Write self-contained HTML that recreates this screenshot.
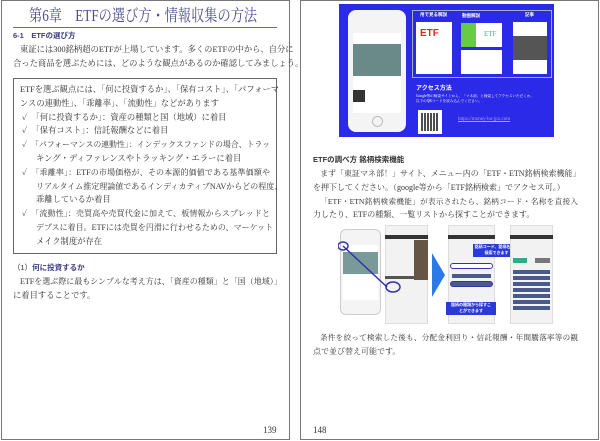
<!DOCTYPE html>
<html><head><meta charset="utf-8"><style>
*{margin:0;padding:0;box-sizing:border-box}
body{width:600px;height:441px;background:#fff;position:relative;overflow:hidden;font-family:"Liberation Serif","Noto Serif CJK SC","Noto Sans CJK JP",serif;color:#333}
.pg{position:absolute;border:1px solid #777;background:#fff}
.t{position:absolute;font-size:8.3px;line-height:10px;white-space:nowrap;text-align:justify;text-align-last:justify}
.g{font-family:"Liberation Sans","Noto Sans CJK JP",sans-serif;font-weight:bold}
.a{position:absolute}
</style></head><body>
<div class="pg" style="left:1px;top:0;width:289px;height:440px"></div>
<div class="pg" style="left:300px;top:0;width:299px;height:440px"></div>

<!-- left page -->
<div class="a" style="left:29px;top:6px;font-size:16.5px;line-height:20px;color:#4d4d8e;white-space:nowrap;transform:scaleX(0.8);transform-origin:0 0">第6章　ETFの選び方・情報収集の方法</div>
<div class="a" style="left:13px;top:27px;width:264px;height:1px;background:#6a6a9a"></div>
<div class="t g" style="left:13px;top:31px;font-size:7.5px;color:#3d3d80;text-align-last:auto">6-1　ETFの選び方</div>
<div class="t" style="left:20px;top:45px;width:257px">東証には300銘柄超のETFが上場しています。多くのETFの中から、自分に</div>
<div class="t" style="left:13px;top:59px;width:264px">合った商品を選ぶためには、どのような観点があるのか確認してみましょう。</div>
<div class="a" style="left:13px;top:78px;width:264px;height:176px;border:1px solid #666"></div>
<div class="t" style="left:20px;top:85px;width:250px">ETFを選ぶ観点には、「何に投資するか」、「保有コスト」、「パフォーマ</div>
<div class="t" style="left:20px;top:99px;text-align-last:auto">ンスの連動性」、「乖離率」、「流動性」などがあります</div>
<div class="t" style="left:22px;top:113px;text-align-last:auto">✓　「何に投資するか」：資産の種類と国（地域）に着目</div>
<div class="t" style="left:22px;top:126px;text-align-last:auto">✓　「保有コスト」：信託報酬などに着目</div>
<div class="t" style="left:22px;top:140px;width:248px;font-size:7.8px">✓　「パフォーマンスの連動性」：インデックスファンドの場合、トラッ</div>
<div class="t" style="left:36px;top:154px;text-align-last:auto">キング・ディファレンスやトラッキング・エラーに着目</div>
<div class="t" style="left:22px;top:168px;width:248px;font-size:8px">✓　「乖離率」：ETFの市場価格が、その本源的価値である基準価額や</div>
<div class="t" style="left:36px;top:182px;width:234px;font-size:8px">リアルタイム推定理論値であるインディカティブNAVからどの程度、</div>
<div class="t" style="left:36px;top:195px;text-align-last:auto">乖離しているか着目</div>
<div class="t" style="left:22px;top:209px;width:248px;font-size:8px">✓　「流動性」：売買高や売買代金に加えて、板情報からスプレッドと</div>
<div class="t" style="left:36px;top:223px;width:234px;font-size:8px">デプスに着目。ETFには売買を円滑に行わせるための、マーケット</div>
<div class="t" style="left:36px;top:237px;text-align-last:auto">メイク制度が存在</div>
<div class="t g" style="left:13px;top:263px;font-size:7.5px;color:#3d3d80;text-align-last:auto"><span style="color:#333;font-weight:normal">（1）</span>何に投資するか</div>
<div class="t" style="left:20px;top:277px;width:257px;font-size:8px">ETFを選ぶ際に最もシンプルな考え方は、「資産の種類」と「国（地域）」</div>
<div class="t" style="left:13px;top:291px;text-align-last:auto">に着目することです。</div>
<div class="t" style="left:263px;top:425px;font-size:9px;text-align-last:auto">139</div>

<!-- right page: blue promo image -->
<div class="a" style="left:339px;top:4px;width:215px;height:133px;background:#2a2ae8"></div>
<div class="a" style="left:348px;top:10px;width:58px;height:122px;background:#f4f4f4;border-radius:8px"></div>
<div class="a" style="left:353px;top:33px;width:48px;height:80px;background:#fff"></div>
<div class="a" style="left:353px;top:44px;width:48px;height:32px;background:#6a8a8a"></div>
<div class="a" style="left:353px;top:90px;width:12px;height:12px;background:#333"></div>
<div class="a" style="left:372px;top:116px;width:11px;height:11px;border:1px solid #bbb;border-radius:50%"></div>
<div class="a" style="left:412px;top:10px;width:140px;height:68px;border:1px solid #aab"></div>
<div class="a g" style="left:420px;top:12px;font-size:4.5px;color:#fff">用で見る解説</div>
<div class="a g" style="left:462px;top:13px;font-size:4.5px;color:#fff">動画解説</div>
<div class="a g" style="left:525px;top:12px;font-size:4.5px;color:#fff">記事</div>
<div class="a" style="left:416px;top:22px;width:36px;height:52px;background:#fff"></div>
<div class="a g" style="left:420px;top:28px;font-size:10px;color:#e22">ETF</div>
<div class="a" style="left:461px;top:23px;width:41px;height:24px;background:#fff"></div>
<div class="a" style="left:461px;top:23px;width:15px;height:24px;background:#6c4"></div>
<div class="a" style="left:484px;top:30px;font-size:7px;color:#5a9">ETF</div>
<div class="a" style="left:461px;top:50px;width:41px;height:24px;background:#fff"></div>
<div class="a" style="left:513px;top:22px;width:34px;height:52px;background:#fff"></div>
<div class="a" style="left:513px;top:36px;width:34px;height:24px;background:#555"></div>
<div class="a g" style="left:416px;top:83px;font-size:6px;color:#fff">アクセス方法</div>
<div class="a" style="left:416px;top:94px;font-size:3.6px;line-height:5px;color:#fff">Google等の検索サイトから、「マネ部」と検索してアクセスいただくか、<br>以下のQRコードを読み込んでください。</div>
<div class="a" style="left:418px;top:110px;width:24px;height:24px;background:#fff;border:3px solid #fff"><div style="width:100%;height:100%;background:repeating-linear-gradient(90deg,#222 0 2px,#fff 2px 3px);opacity:.8"></div></div>
<div class="a" style="left:458px;top:117px;font-size:5px;color:#aac;text-decoration:underline">https://money-bu-jpx.com</div>

<div class="t g" style="left:313px;top:155px;font-size:7.5px;text-align-last:auto">ETFの調べ方 銘柄検索機能</div>
<div class="t" style="left:320px;top:169px;width:258px;font-size:8px">まず「東証マネ部！」サイト、メニュー内の「ETF・ETN銘柄検索機能」</div>
<div class="t" style="left:313px;top:183px;text-align-last:auto;font-size:8px">を押下してください。（google等から「ETF銘柄検索」でアクセス可。）</div>
<div class="t" style="left:320px;top:197px;width:258px;font-size:7.6px">「ETF・ETN銘柄検索機能」が表示されたら、銘柄コード・名称を直接入</div>
<div class="t" style="left:313px;top:210px;text-align-last:auto;font-size:8px">力したり、ETFの種類、一覧リストから探すことができます。</div>

<!-- second image -->
<div class="a" style="left:340px;top:229px;width:41px;height:86px;background:#f4f4f4;border:1px solid #ccc;border-radius:6px"></div>
<div class="a" style="left:343px;top:245px;width:35px;height:55px;background:#fff"></div>
<div class="a" style="left:343px;top:252px;width:35px;height:22px;background:#7a9a9a"></div>
<div class="a" style="left:385px;top:225px;width:43px;height:99px;background:#f2f2f2;border:1px solid #ddd"></div>
<div class="a" style="left:385px;top:235px;width:43px;height:4px;background:#333"></div>
<div class="a" style="left:414px;top:240px;width:14px;height:40px;background:#654"></div>
<div class="a" style="left:385px;top:276px;width:30px;height:3px;background:#555"></div>
<svg class="a" style="left:338px;top:225px" width="217" height="100">
<line x1="5" y1="21" x2="49" y2="62" stroke="#33a" stroke-width="1.5"/>
<ellipse cx="5" cy="21" rx="5" ry="4" fill="none" stroke="#33a" stroke-width="1.5"/>
<ellipse cx="55" cy="62" rx="7" ry="5" fill="none" stroke="#33a" stroke-width="1.5"/>
<path d="M94 28 L107 50 L94 72 Z" fill="#2a7ae8"/>
</svg>
<div class="a" style="left:448px;top:225px;width:47px;height:99px;background:#f2f2f2;border:1px solid #ddd"></div>
<div class="a" style="left:448px;top:235px;width:47px;height:4px;background:#333"></div>
<div class="a" style="left:450px;top:263px;width:43px;height:6px;background:#fff;border:1.5px solid #33a;border-radius:3px"></div>
<div class="a" style="left:452px;top:274px;width:39px;height:4px;background:#4a5a8a"></div>
<div class="a" style="left:450px;top:281px;width:43px;height:6px;background:#4a5a8a;border:1.5px solid #33a;border-radius:3px"></div>
<div class="a g" style="left:473px;top:244px;width:47px;height:13px;background:#2a3ad8;color:#fff;font-size:4px;line-height:6px;text-align:center">銘柄コード、銘柄名称で<br>検索できます</div>
<div class="a g" style="left:446px;top:302px;width:50px;height:13px;background:#2a3ad8;color:#fff;font-size:4px;line-height:6px;text-align:center">銘柄の種類から探すこ<br>とができます</div>
<div class="a" style="left:510px;top:225px;width:43px;height:99px;background:#f2f2f2;border:1px solid #ddd"></div>
<div class="a" style="left:510px;top:235px;width:43px;height:4px;background:#333"></div>
<div class="a" style="left:513px;top:258px;width:14px;height:5px;background:#3a8"></div>
<div class="a" style="left:535px;top:258px;width:15px;height:5px;background:#777"></div>
<div class="a" style="left:513px;top:270px;width:37px;height:40px;background:repeating-linear-gradient(#4a5a8a 0 4px,#f2f2f2 4px 6px)"></div>

<div class="t" style="left:320px;top:333px;width:258px;font-size:7.6px">条件を絞って検索した後も、分配金利回り・信託報酬・年間騰落率等の観</div>
<div class="t" style="left:313px;top:347px;text-align-last:auto;font-size:8px">点で並び替え可能です。</div>
<div class="t" style="left:313px;top:425px;font-size:9px;text-align-last:auto">148</div>
</body></html>
